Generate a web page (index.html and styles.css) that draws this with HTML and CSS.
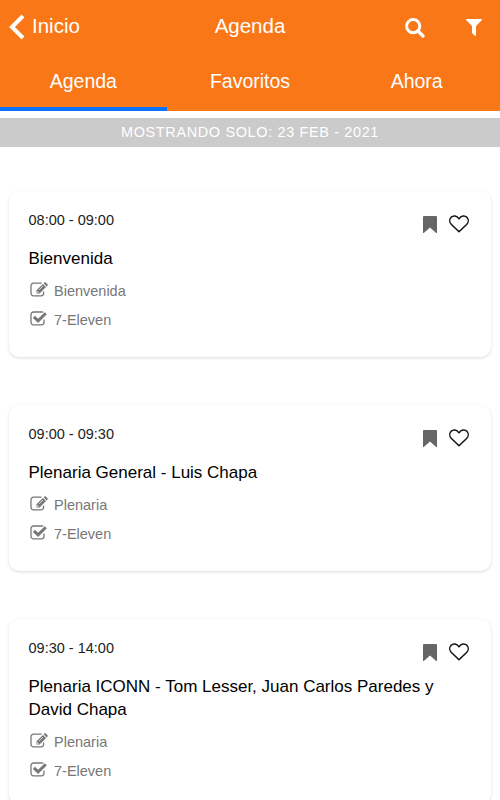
FILE: index.html
```html
<!DOCTYPE html>
<html lang="es">
  <head>
    <meta charset="UTF-8" />
    <title>Agenda</title>
    <link rel="stylesheet" href="styles.css">
  </head>
  <body>
    <!-- shared icons -->
    <svg class="sprite" width="0" height="0">
      <symbol id="bookmark" viewBox="0 0 14 17">
        <path d="M1 0h12a1 1 0 0 1 1 1v16h-.8L7 11.500.8 17H0V1a1 1 0 0 1 1-1z" fill="#666" />
      </symbol>
      <symbol id="heart" viewBox="0 0 20 18">
        <path d="M10 16.800 2.400 9.500C.3 7.300.300 4.200 2 2.400 4.300.3 7.800.6 10 3.800 12.200.6 15.700.3 18 2.400c1.700 1.800 1.700 4.900-.4 7.100z" fill="none" stroke="#111" stroke-width="1.500" stroke-linejoin="round" />
      </symbol>
      <symbol id="edit" viewBox="0 0 18 15">
        <path d="M11.500 1.200H3.500A2.500 2.500 0 0 0 1 3.700v7.600a2.500 2.500 0 0 0 2.500 2.500h7.600a2.500 2.500 0 0 0 2.500-2.500V9.500" fill="none" stroke="#777" stroke-width="1.300" />
        <path d="M6.500 8.300 12.900 1.900l3.100 3.100-6.400 6.400H6.500z M13.600 1.300l.8-.8a1 1 0 0 1 1.400 0l1.700 1.700a1 1 0 0 1 0 1.400l-.8.8z" fill="#777" />
        <path d="M9 8 13 4M7.500 9.200v1.200h1.200" fill="none" stroke="#fff" stroke-width=".7" />
      </symbol>
      <symbol id="check" viewBox="0 0 18 15">
        <path d="M13.300 1.300A2.500 2.500 0 0 0 12 1H3.500A2.500 2.500 0 0 0 1 3.500v7.800a2.500 2.500 0 0 0 2.500 2.500H11.500a2.500 2.500 0 0 0 2.500-2.500V8.500" fill="none" stroke="#777" stroke-width="1.300" />
        <path d="M3.900 5.900 8.100 9.800 15.800 2.200" fill="none" stroke="#777" stroke-width="3" />
      </symbol>
    </svg>

    <header>
      <div class="navbar">
        <a href="#" class="back">
          <svg width="16" height="26" viewBox="0 0 16 26"><path d="M14 2 3 13l11 11" fill="none" stroke="#fff" stroke-width="4" /></svg>
          <span>Inicio</span>
        </a>
        <h1>Agenda</h1>
        <div class="actions">
          <svg width="20" height="20" viewBox="0 0 20 20"><circle cx="8.200" cy="8.200" r="6.600" fill="none" stroke="#fff" stroke-width="3" /><path d="M13 13l5 5" stroke="#fff" stroke-width="3.200" stroke-linecap="round" /></svg>
          <svg width="16" height="17" viewBox="0 0 16 17"><path d="M.6 0h14.800q1 .3.300 1.200L10 7v9.200q-.2 1-1.200.6L6 14V7L.3 1.200Q-.4.300.6 0z" fill="#fff" /></svg>
        </div>
      </div>
      <nav>
        <a href="#" class="active">Agenda</a>
        <a href="#">Favoritos</a>
        <a href="#">Ahora</a>
      </nav>
    </header>

    <div class="date-bar">MOSTRANDO SOLO: 23 FEB - 2021</div>

    <main>
      <div class="card">
        <div class="card-top">
          <span class="time">08:00 - 09:00</span>
          <div class="marks">
            <svg width="14" height="17"><use href="#bookmark" /></svg>
            <svg width="20" height="18"><use href="#heart" /></svg>
          </div>
        </div>
        <h2>Bienvenida</h2>
        <p><svg width="18" height="15"><use href="#edit" /></svg>Bienvenida</p>
        <p><svg width="18" height="15"><use href="#check" /></svg>7-Eleven</p>
      </div>

      <div class="card">
        <div class="card-top">
          <span class="time">09:00 - 09:30</span>
          <div class="marks">
            <svg width="14" height="17"><use href="#bookmark" /></svg>
            <svg width="20" height="18"><use href="#heart" /></svg>
          </div>
        </div>
        <h2>Plenaria General - Luis Chapa</h2>
        <p><svg width="18" height="15"><use href="#edit" /></svg>Plenaria</p>
        <p><svg width="18" height="15"><use href="#check" /></svg>7-Eleven</p>
      </div>

      <div class="card">
        <div class="card-top">
          <span class="time">09:30 - 14:00</span>
          <div class="marks">
            <svg width="14" height="17"><use href="#bookmark" /></svg>
            <svg width="20" height="18"><use href="#heart" /></svg>
          </div>
        </div>
        <h2>Plenaria ICONN - Tom Lesser, Juan Carlos Paredes y David Chapa</h2>
        <p><svg width="18" height="15"><use href="#edit" /></svg>Plenaria</p>
        <p><svg width="18" height="15"><use href="#check" /></svg>7-Eleven</p>
      </div>
    </main>
  </body>
</html>
```
FILE: styles.css
```css
* {
  box-sizing: border-box;
}

body {
  margin: 0;
  height: 800px;
  overflow: hidden;
  background-color: #fff;
  font-family: "Liberation Sans", Arial, sans-serif;
}

svg {
  display: block;
  flex: none;
}

.sprite {
  position: absolute;
}

header {
  height: 111px;
  background-color: #f97717;
  color: white;
}

header a {
  color: white;
  text-decoration: none;
}

.navbar {
  display: grid;
  grid-template-columns: 1fr 1fr 1fr;
  align-items: center;
  height: 52px;
  font-size: 20.5px;
}

.navbar h1 {
  margin: 0;
  font-size: 20.5px;
  font-weight: normal;
  text-align: center;
}

.back {
  display: flex;
  align-items: center;
  gap: 7px;
  padding-left: 9px;
}

.back svg {
  margin-top: 2px;
}

.actions {
  display: flex;
  justify-content: flex-end;
  align-items: center;
  gap: 41px;
  padding: 3px 18px 0 0;
}

nav {
  display: grid;
  grid-template-columns: 1fr 1fr 1fr;
  height: 59px;
}

nav a {
  height: 59px;
  border-bottom: 4px solid transparent;
  font-size: 19.5px;
  line-height: 59px;
  text-align: center;
}

nav a.active {
  border-color: #0a73fa;
}

.date-bar {
  height: 29px;
  margin: 6.5px 0 44.5px;
  background-color: #cbcbcb;
  color: white;
  font-size: 14.5px;
  line-height: 28px;
  letter-spacing: 0.62px;
  text-align: center;
}

main {
  padding: 0 9px;
}

.card {
  min-height: 166px;
  margin-bottom: 48px;
  padding: 19px 20px 19px 19.5px;
  border-radius: 10px;
  box-shadow: 0 1px 3px rgba(0, 0, 0, 0.15);
}

.card-top {
  display: flex;
  justify-content: space-between;
  height: 37px;
}

.time {
  color: #222;
  font-size: 14.5px;
  line-height: 20px;
}

.marks {
  display: flex;
  align-items: center;
  gap: 12.5px;
  height: 28px;
  padding-right: 2px;
}

.card h2 {
  margin: 0 0 6px;
  color: #000;
  font-size: 17px;
  font-weight: normal;
  line-height: 23px;
}

.card p {
  display: flex;
  align-items: center;
  gap: 6px;
  height: 29px;
  margin: 0;
  padding: 1px 0 0 1.5px;
  color: #777;
  font-size: 14.5px;
}

.card p svg {
  margin-top: -3px;
}
```
